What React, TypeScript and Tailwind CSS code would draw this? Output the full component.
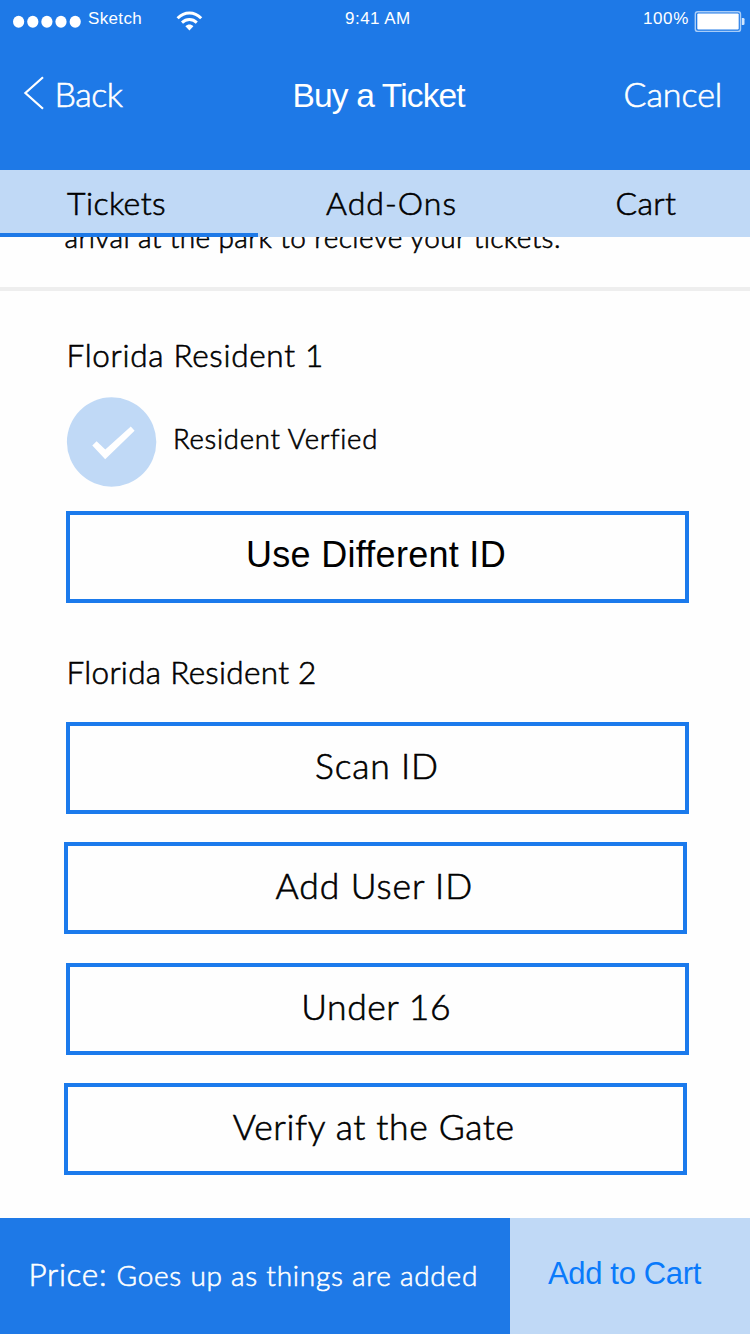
import React from "react";

const HUMANIST = "font-['Lato','Open_Sans',sans-serif] font-light [-webkit-text-stroke:0.6px_currentColor]";
const GROTESK = "font-['Liberation_Sans',Arial,sans-serif]";

function StatusBar() {
  return (
    <div className={`grid h-[50px] grid-cols-[345px_298px_1fr] pt-[9px] text-[17px] leading-[18px] whitespace-nowrap ${GROTESK}`}>
      <div className="flex items-start">
        <svg className="mt-[6px] ml-[12px] h-[14px] w-[70px] shrink-0" viewBox="12 15 70 14" fill="#fff">
          <ellipse cx="18.6" cy="21.7" rx="5.6" ry="6" />
          <ellipse cx="32.8" cy="21.7" rx="5.6" ry="6" />
          <ellipse cx="46.9" cy="21.7" rx="5.6" ry="6" />
          <ellipse cx="61" cy="21.7" rx="5.6" ry="6" />
          <ellipse cx="75.2" cy="21.7" rx="5.6" ry="6" />
        </svg>
        <span className="mt-px ml-[6px] w-[86px] text-[17px] tracking-[0.35px]">Sketch</span>
        <svg className="mt-[2px] h-[20px] w-[30px] shrink-0" viewBox="174 11 30 20" fill="none" stroke="#fff">
          <path d="M177.6 18.2C184.5 11.2 194.3 11.2 201.2 18.2" strokeWidth="3" />
          <path d="M182 22.6C186.3 18.5 192.5 18.5 196.8 22.6" strokeWidth="2.9" />
          <path d="M185.4 26.2C187.7 23.9 191.1 23.9 193.4 26.2L189.4 30.4Z" fill="#fff" stroke="none" />
        </svg>
      </div>
      <span className="pt-px tracking-[0.48px]">9:41 AM</span>
      <div className="flex items-start">
        <span className="mt-px w-[51px] tracking-[0.6px]">100%</span>
        <svg className="mt-[1px] h-[24px] w-[52px] shrink-0" viewBox="694 10 52 24">
          <rect x="695.3" y="11.8" width="45.2" height="19.6" rx="2.5" fill="none" stroke="#a9cdf8" strokeWidth="1.4" />
          <rect x="697.3" y="13.6" width="41.4" height="16" rx="1" fill="#fff" />
          <path d="M741.8 18h1.4q1.3 0 1.3 1.3v4.4q0 1.3-1.3 1.3h-1.4z" fill="#d3e6fc" />
        </svg>
      </div>
    </div>
  );
}

function NavBar() {
  return (
    <div className={`grid h-[120px] grid-cols-[292.5px_331px_1fr] items-start whitespace-nowrap ${HUMANIST}`}>
      <div className="flex pt-[27px]">
        <svg className="-mt-[2px] ml-[22px] h-[36px] w-[24px] shrink-0" viewBox="22 75 24 36" fill="none" stroke="#fff" strokeWidth="2.2">
          <path d="M43 77.2L25.4 93L43 108.8" />
        </svg>
        <span className="ml-[8.5px] text-[34px] leading-[34px] tracking-[-0.5px]">Back</span>
      </div>
      <h1 className="pt-[29px] font-['Liberation_Sans',Arial,sans-serif] text-[33.5px] leading-[34px] font-normal tracking-[-0.85px] [-webkit-text-stroke:0px]">
        Buy a Ticket
      </h1>
      <span className="pt-[27px] text-[34px] leading-[34px] tracking-[-0.05px]">Cancel</span>
    </div>
  );
}

function Tabs() {
  return (
    <div className={`relative grid h-[67px] shrink-0 grid-cols-[258px_292px_1fr] bg-[#c0d9f6] pt-[17px] text-[32px] leading-[32px] whitespace-nowrap text-black ${HUMANIST}`}>
      <span className="pl-[67px] tracking-[0.42px]">Tickets</span>
      <span className="pl-[68px] tracking-[1.04px]">Add-Ons</span>
      <span className="pl-[65.5px] tracking-[0.36px]">Cart</span>
      <div className="absolute bottom-0 left-0 h-[4px] w-[258px] bg-[#1e79e7]" />
    </div>
  );
}

function ActionButton({ label, className }: { label: string; className: string }) {
  return (
    <button className={`block h-[92px] w-[622.5px] border-4 border-[#1b7aec] text-left leading-[36px] whitespace-nowrap ${className}`}>
      {label}
    </button>
  );
}

export default function App() {
  return (
    <div className="flex h-[1334px] w-[750px] flex-col overflow-hidden bg-[#fefefe] text-black">
      <header className="h-[170px] shrink-0 bg-[#1e79e7] text-white">
        <StatusBar />
        <NavBar />
      </header>
      <Tabs />

      <main className={`h-[980.5px] shrink-0 overflow-hidden ${HUMANIST}`}>
        <p className="-mt-[14px] h-[64px] pl-[64.5px] text-[28px] leading-[28px] tracking-[0.39px] whitespace-nowrap">
          arival at the park to recieve your tickets.
        </p>
        <div className="h-[4px] bg-[#eeeeee]" />

        <section className="pt-[48px] pl-[66px]">
          <h2 className="pl-[0.5px] text-[31.5px] leading-[32px] tracking-[0.7px]">Florida Resident 1</h2>
          <div className="mt-[25px] flex">
            <svg className="h-[92px] w-[92px] shrink-0" viewBox="66 396 92 92">
              <circle cx="111.6" cy="442" r="44.7" fill="#c0d9f6" />
              <path d="M92.3 445.6L96.6 441.2L105.3 449.6L130.8 426.6L134.6 430.8L105.2 459.3Z" fill="#fff" />
            </svg>
            <span className="pt-[29px] pl-[15px] text-[27.5px] leading-[28px] tracking-[0.72px]">Resident Verfied</span>
          </div>
          <ActionButton
            label="Use Different ID"
            className="mt-[23.4px] pb-[4px] pl-[176px] font-['Liberation_Sans',Arial,sans-serif] text-[36px] font-normal tracking-[0.28px] [-webkit-text-stroke:0px]"
          />
        </section>

        <section className="pt-[52.6px] pl-[64px]">
          <h2 className="pl-[2.5px] text-[31.5px] leading-[32px] tracking-[0.3px]">Florida Resident 2</h2>
          <div className="mt-[34px] flex flex-col gap-[28.4px]">
            <ActionButton label="Scan ID" className="ml-[2px] pb-[4px] pl-[245px] text-[35.5px] tracking-[0.81px]" />
            <ActionButton label="Add User ID" className="pb-[5px] pl-[207.5px] text-[35.5px] tracking-[0.9px]" />
            <ActionButton label="Under 16" className="ml-[2px] pb-[4px] pl-[231.2px] text-[35.5px] tracking-[0.55px]" />
            <ActionButton label="Verify at the Gate" className="pb-[5px] pl-[164.8px] text-[35.5px] tracking-[0.63px]" />
          </div>
        </section>
      </main>

      <footer className="flex h-[116.5px] shrink-0">
        <div className={`flex w-[510px] items-baseline bg-[#1e79e7] pt-[40px] pl-[28.5px] whitespace-nowrap text-white ${HUMANIST}`}>
          <span className="w-[88px] text-[31.5px] leading-[32px] tracking-[0.7px]">Price:</span>
          <span className="text-[28px] leading-[28px] tracking-[0.75px]">Goes up as things are added</span>
        </div>
        <button className={`flex-1 bg-[#c0d9f6] pb-[3px] pl-[38px] text-left text-[31px] leading-[32px] tracking-[-0.35px] text-[#0a7afb] ${GROTESK}`}>
          Add to Cart
        </button>
      </footer>
    </div>
  );
}
